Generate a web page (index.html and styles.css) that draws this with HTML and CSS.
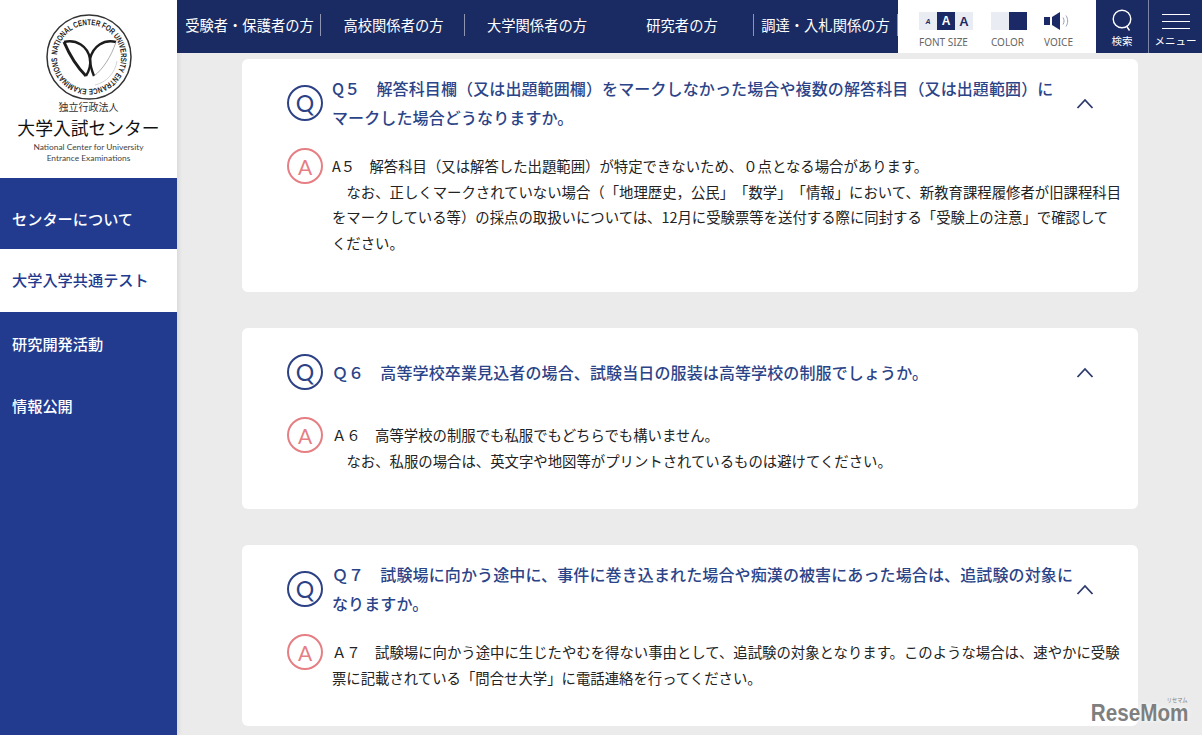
FILE: index.html
```html
<!DOCTYPE html>
<html lang="ja">
<head>
<meta charset="utf-8">
<title>大学入試センター</title>
<link rel="stylesheet" href="styles.css">
</head>
<body>
<div class="page">
  <aside class="sidebar">
    <div class="logo">
      <svg class="seal" width="88" height="88" viewBox="0 0 88 88">
        <defs><path id="ring" d="M44 44 m-32 0 a32 32 0 1 1 64 0 a32 32 0 1 1 -64 0"/></defs>
        <circle cx="44" cy="44" r="42" fill="none" stroke="#333" stroke-width="1.500"/>
        <path d="M72 48A29 29 0 0 1 50 72" fill="none" stroke="#aaa" stroke-width=".5"/>
        <text class="seal-text"><textPath href="#ring" startOffset="2" textLength="198" lengthAdjust="spacingAndGlyphs">NATIONAL CENTER FOR UNIVERSITY ENTRANCE EXAMINATIONS</textPath></text>
        <path d="M19 29C31 26 43 33 45 46" class="wing"/>
        <path d="M19 29C25 43 32 54 41 63" class="wing wing-heavy"/>
        <path d="M45 46C46 52 44 58 41 63" class="wing"/>
        <path d="M71 29C59 26 48 33 45 46" class="wing"/>
        <path d="M45 46C45 52 47 58 49 63" class="wing"/>
        <path d="M71 29C66 44 58 56 49 63" class="wing wing-thin"/>
      </svg>
      <div class="logo-org">独立行政法人</div>
      <div class="logo-name">大学入試センター</div>
      <div class="logo-en">National Center for University<br>Entrance Examinations</div>
    </div>
    <nav class="side-nav">
      <a class="side-item side-first">センターについて</a>
      <a class="side-item side-active">大学入学共通テスト</a>
      <a class="side-item">研究開発活動</a>
      <a class="side-item">情報公開</a>
    </nav>
  </aside>
  <div class="content">
    <header class="topbar">
      <nav class="top-nav">
        <a class="top-item top-a">受験者・保護者の方</a>
        <a class="top-item top-b">高校関係者の方</a>
        <a class="top-item top-c">大学関係者の方</a>
        <a class="top-item top-d">研究者の方</a>
        <a class="top-item top-e">調達・入札関係の方</a>
      </nav>
      <div class="tools">
        <div class="tool tool-font">
          <div class="swatches"><span class="fs fs-s">A</span><span class="fs fs-m">A</span><span class="fs fs-l">A</span></div>
          <div class="tool-label">FONT SIZE</div>
        </div>
        <div class="tool tool-color">
          <div class="swatches"><span class="col col-l"></span><span class="col col-d"></span></div>
          <div class="tool-label">COLOR</div>
        </div>
        <div class="tool tool-voice">
          <svg class="speaker" width="26" height="18" viewBox="0 0 26 18">
            <path d="M0 5h6v8H0z" fill="#1b2a66"/><path d="M8 5l8-5v18l-8-5z" fill="#1b2a66"/>
            <path d="M19 5.500c1.400 2.300 1.400 4.700 0 7M22 3.500c2.200 3.400 2.200 7.600 0 11" fill="none" stroke="#7d86a6" stroke-width=".8"/>
          </svg>
          <div class="tool-label">VOICE</div>
        </div>
      </div>
      <a class="action action-search">
        <svg width="22" height="23" viewBox="0 0 22 23"><circle cx="11" cy="10" r="8.800" fill="none" stroke="#fff" stroke-width="1.400"/><path d="M15.500 17l3 4.500" stroke="#fff" stroke-width="1.400"/></svg>
        <span class="action-label">検索</span>
      </a>
      <a class="action action-menu">
        <span class="bars"><i></i><i></i><i></i></span>
        <span class="action-label">メニュー</span>
      </a>
    </header>
    <main class="faq">
      <section class="card card-5">
        <div class="q-row">
          <span class="badge badge-q">Q</span>
          <h2 class="q-text">Q５　解答科目欄（又は出題範囲欄）をマークしなかった場合や複数の解答科目（又は出題範囲）にマークした場合どうなりますか。</h2>
          <svg class="chev" width="18" height="11" viewBox="0 0 18 11"><path d="M1.500 10l7.500-8 7.500 8" fill="none" stroke="#2b3a6a" stroke-width="1.800"/></svg>
        </div>
        <div class="a-row">
          <span class="badge badge-a">A</span>
          <div class="a-text">
            <p>A５　解答科目（又は解答した出題範囲）が特定できないため、０点となる場合があります。</p>
            <p class="indent">なお、正しくマークされていない場合（「地理歴史，公民」「数学」「情報」において、新教育課程履修者が旧課程科目をマークしている等）の採点の取扱いについては、12月に受験票等を送付する際に同封する「受験上の注意」で確認して<span class="nb">ください。</span></p>
          </div>
        </div>
      </section>
      <section class="card card-6">
        <div class="q-row">
          <span class="badge badge-q">Q</span>
          <h2 class="q-text">Ｑ６　高等学校卒業見込者の場合、試験当日の服装は高等学校の制服でしょうか。</h2>
          <svg class="chev" width="18" height="11" viewBox="0 0 18 11"><path d="M1.500 10l7.500-8 7.500 8" fill="none" stroke="#2b3a6a" stroke-width="1.800"/></svg>
        </div>
        <div class="a-row">
          <span class="badge badge-a">A</span>
          <div class="a-text">
            <p>Ａ６　高等学校の制服でも私服でもどちらでも構いません。</p>
            <p class="indent">なお、私服の場合は、英文字や地図等がプリントされているものは避けてください。</p>
          </div>
        </div>
      </section>
      <section class="card card-7">
        <div class="q-row">
          <span class="badge badge-q">Q</span>
          <h2 class="q-text">Ｑ７　試験場に向かう途中に、事件に巻き込まれた場合や痴漢の被害にあった場合は、追試験の対象になりますか。</h2>
          <svg class="chev" width="18" height="11" viewBox="0 0 18 11"><path d="M1.500 10l7.500-8 7.500 8" fill="none" stroke="#2b3a6a" stroke-width="1.800"/></svg>
        </div>
        <div class="a-row">
          <span class="badge badge-a">A</span>
          <div class="a-text">
            <p>Ａ７　試験場に向かう途中に生じたやむを得ない事由として、追試験の対象となります。このような場合は、速やかに受験票に記載されている「問合せ大学」に電話連絡を行ってください。</p>
          </div>
        </div>
      </section>
    </main>
  </div>
</div>
<div class="watermark"><span class="wm-kana">リセマム</span>ReseMom</div>
</body>
</html>
```
FILE: styles.css
```css
* { box-sizing: border-box; }
html, body { margin: 0; height: 735px; overflow: hidden; }
body { font-family: "Noto Sans CJK JP", "Noto Sans", sans-serif; background: #ebebeb; color: #222; text-spacing-trim: space-all; line-break: strict; }
.page { display: flex; height: 735px; }
.sidebar { width: 177px; flex: none; background: #223b8f; z-index: 1; box-shadow: 2px 0 4px rgba(0, 0, 0, .08); }
.logo { height: 178px; background: #fff; display: flex; flex-direction: column; align-items: center; padding-top: 13px; }
.seal { flex: none; overflow: visible; }
.seal-text { font: 700 8.200px "Liberation Sans", sans-serif; fill: #222; }
.wing { fill: none; stroke: #1c1c1c; stroke-width: 2.400; }
.wing-heavy { stroke-width: 3; }
.wing-thin { stroke: #888; stroke-width: .7; }
.logo-org { font-size: 10px; line-height: 14px; margin-top: -1px; color: #333; }
.logo-name { font-size: 17.800px; line-height: 24px; margin-top: 1px; color: #111; }
.logo-en { font-family: "Lato", sans-serif; font-size: 8.400px; line-height: 10.500px; text-align: center; color: #444; margin-top: 3px; }
.side-nav { display: flex; flex-direction: column; }
.side-item { display: flex; align-items: center; height: 62.500px; padding-left: 12px; font-size: 15.200px; font-weight: 500; color: #fff; }
.side-first { height: 71px; padding-top: 9px; }
.side-active { background: #fff; color: #223b8f; padding-bottom: 2px; }
.content { flex: 1; min-width: 0; display: flex; flex-direction: column; }
.topbar { height: 53px; flex: none; display: flex; background: #1a2b63; z-index: 1; }
.top-nav { display: flex; width: 721px; align-items: center; padding-bottom: 3px; }
.top-item { font-size: 14.300px; color: #fff; text-align: center; height: 22px; line-height: 22px; white-space: nowrap; }
.top-a { width: 144px; padding-left: 2px; border-right: 1px solid #8d95b3; }
.top-b { width: 144px; padding-left: 2px; border-right: 1px solid #8d95b3; }
.top-c { width: 144px; }
.top-d { width: 145px; padding-left: 2px; border-right: 1px solid #8d95b3; }
.top-e { width: 144px; border-right: 1px solid #8d95b3; }
.tools { width: 198px; background: #fff; display: flex; padding-top: 12px; }
.tool { display: flex; flex-direction: column; align-items: flex-start; }
.tool-font { margin-left: 21px; width: 54px; }
.tool-color { margin-left: 18px; width: 36px; }
.tool-voice { margin-left: 17px; width: 30px; }
.swatches { display: flex; height: 18px; }
.fs { width: 18px; display: flex; align-items: center; justify-content: center; font-family: "Liberation Sans", sans-serif; font-weight: 700; background: #e9edf3; color: #1b2a66; }
.fs-s { font-size: 7px; font-style: italic; }
.fs-m { font-size: 12px; background: #1b2a66; color: #fff; }
.fs-l { font-size: 13px; }
.col { width: 18px; }
.col-l { background: #e9edf3; }
.col-d { background: #1b2a66; }
.speaker { display: block; }
.tool-label { font-family: "Noto Sans", sans-serif; font-size: 10px; line-height: 12px; margin-top: 6px; color: #666; white-space: nowrap; }
.action { flex: none; display: flex; flex-direction: column; align-items: center; color: #fff; }
.action-search { width: 52px; padding-top: 9px; }
.action-menu { width: 54px; border-left: 1px solid #7d86a6; padding-top: 14px; }
.action-label { font-size: 10.500px; line-height: 14px; margin-top: 2px; white-space: nowrap; }
.bars { display: flex; flex-direction: column; gap: 6px; width: 28px; margin-bottom: 3px; }
.bars i { display: block; height: 1px; background: #fff; }
.faq { flex: 1; min-height: 0; padding: 6px 64px 0 65px; display: flex; flex-direction: column; gap: 36px; }
.card { background: #fff; border-radius: 6px; padding: 15px 0 0 45px; flex: none; }
.card-5 { height: 233px; }
.card-6 { height: 181px; }
.card-7 { height: 181px; }
.q-row { display: flex; align-items: center; min-height: 58px; }
.badge { flex: none; width: 36px; height: 36px; border-radius: 50%; display: flex; align-items: center; justify-content: center; font-family: "Lato", "Noto Sans", sans-serif; font-weight: 400; border: 2.400px solid; }
.badge-q { font-size: 23px; border-color: #2d4185; color: #2d4185; }
.badge-a { font-size: 21px; border-color: #e57f84; color: #e57f84; }
.q-text { margin: 0 0 0 9px; width: 744px; flex: none; font-size: 16px; letter-spacing: .12px; font-weight: 500; line-height: 29px; color: #2b4488; }
.chev { flex: none; }
.a-row { display: flex; margin-top: 16px; }
.a-text { margin-left: 9px; width: 793px; flex: none; padding-top: 5px; font-size: 14.380px; line-height: 25.600px; color: #222; }
.a-text p { margin: 0; }
.indent { text-indent: 14.400px; }
.nb { white-space: nowrap; }
.watermark { position: absolute; right: 14px; top: 704px; z-index: 2; font-family: "Liberation Sans", sans-serif; font-weight: 700; font-size: 24px; line-height: 17px; color: #7f7f7f; transform: scaleX(.86); transform-origin: right center; text-shadow: 0 0 6px #fff; }
.wm-kana { position: absolute; right: 1px; top: -8px; font-family: "Noto Sans CJK JP", sans-serif; font-size: 6px; line-height: 7px; font-weight: 400; }
```
